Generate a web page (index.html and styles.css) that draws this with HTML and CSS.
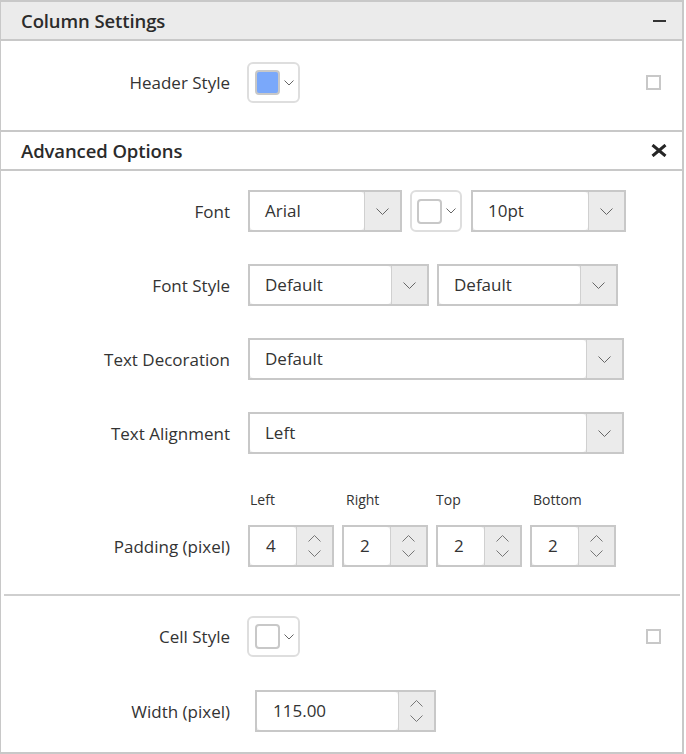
FILE: index.html
```html
<!DOCTYPE html>
<html>
<head>
<meta charset="utf-8">
<link rel="stylesheet" href="styles.css">
</head>
<body>
<div class="panel">
  <div class="head head-gray">
    <span class="title">Column Settings</span>
    <svg class="minus" width="13" height="2" viewBox="0 0 13 2"><rect width="13" height="2" fill="#333"/></svg>
  </div>
  <div class="row row-top">
    <span class="label">Header Style</span>
    <div class="picker picker-wide"><span class="swatch swatch-blue"></span><svg class="chev-sm" width="10" height="6" viewBox="0 0 10 6"><path d="M0.5 0.5 L5 5 L9.5 0.5" fill="none" stroke="#666" stroke-width="1"/></svg></div>
    <span class="check"></span>
  </div>
  <div class="head head-white">
    <span class="title">Advanced Options</span>
    <svg class="close" width="16" height="13" viewBox="0 0 16 13"><path d="M1.5 1 L14.5 12 M14.5 1 L1.5 12" stroke="#262626" stroke-width="3" fill="none"/></svg>
  </div>
  <div class="form">
    <div class="row row-field">
      <span class="label">Font</span>
      <div class="controls">
        <div class="select w-font"><span class="val">Arial</span><span class="btn"><svg width="13" height="7" viewBox="0 0 13 7"><path d="M0.5 0.5 L6.5 6.5 L12.5 0.5" fill="none" stroke="#666" stroke-width="1"/></svg></span></div>
        <div class="picker"><span class="swatch"></span><svg class="chev-sm" width="10" height="6" viewBox="0 0 10 6"><path d="M0.5 0.5 L5 5 L9.5 0.5" fill="none" stroke="#666" stroke-width="1"/></svg></div>
        <div class="select w-size"><span class="val">10pt</span><span class="btn"><svg width="13" height="7" viewBox="0 0 13 7"><path d="M0.5 0.5 L6.5 6.5 L12.5 0.5" fill="none" stroke="#666" stroke-width="1"/></svg></span></div>
      </div>
    </div>
    <div class="row row-field">
      <span class="label">Font Style</span>
      <div class="controls">
        <div class="select w-half"><span class="val">Default</span><span class="btn"><svg width="13" height="7" viewBox="0 0 13 7"><path d="M0.5 0.5 L6.5 6.5 L12.5 0.5" fill="none" stroke="#666" stroke-width="1"/></svg></span></div>
        <div class="select w-half"><span class="val">Default</span><span class="btn"><svg width="13" height="7" viewBox="0 0 13 7"><path d="M0.5 0.5 L6.5 6.5 L12.5 0.5" fill="none" stroke="#666" stroke-width="1"/></svg></span></div>
      </div>
    </div>
    <div class="row row-field">
      <span class="label">Text Decoration</span>
      <div class="controls">
        <div class="select w-full"><span class="val">Default</span><span class="btn"><svg width="13" height="7" viewBox="0 0 13 7"><path d="M0.5 0.5 L6.5 6.5 L12.5 0.5" fill="none" stroke="#666" stroke-width="1"/></svg></span></div>
      </div>
    </div>
    <div class="row row-field">
      <span class="label">Text Alignment</span>
      <div class="controls">
        <div class="select w-full"><span class="val">Left</span><span class="btn"><svg width="13" height="7" viewBox="0 0 13 7"><path d="M0.5 0.5 L6.5 6.5 L12.5 0.5" fill="none" stroke="#666" stroke-width="1"/></svg></span></div>
      </div>
    </div>
    <div class="padding-block">
      <span></span>
      <div class="sub-labels">
        <span>Left</span><span class="sl-right">Right</span><span class="sl-top">Top</span><span class="sl-bottom">Bottom</span>
      </div>
      <span class="label">Padding (pixel)</span>
      <div class="spinners">
        <div class="spin"><span class="val">4</span><span class="btn spin-btn"><svg width="13" height="7" viewBox="0 0 13 7"><path d="M0.5 6.5 L6.5 0.5 L12.5 6.5" fill="none" stroke="#777" stroke-width="1"/></svg><svg width="13" height="7" viewBox="0 0 13 7"><path d="M0.5 0.5 L6.5 6.5 L12.5 0.5" fill="none" stroke="#777" stroke-width="1"/></svg></span></div>
        <div class="spin"><span class="val">2</span><span class="btn spin-btn"><svg width="13" height="7" viewBox="0 0 13 7"><path d="M0.5 6.5 L6.5 0.5 L12.5 6.5" fill="none" stroke="#777" stroke-width="1"/></svg><svg width="13" height="7" viewBox="0 0 13 7"><path d="M0.5 0.5 L6.5 6.5 L12.5 0.5" fill="none" stroke="#777" stroke-width="1"/></svg></span></div>
        <div class="spin"><span class="val">2</span><span class="btn spin-btn"><svg width="13" height="7" viewBox="0 0 13 7"><path d="M0.5 6.5 L6.5 0.5 L12.5 6.5" fill="none" stroke="#777" stroke-width="1"/></svg><svg width="13" height="7" viewBox="0 0 13 7"><path d="M0.5 0.5 L6.5 6.5 L12.5 0.5" fill="none" stroke="#777" stroke-width="1"/></svg></span></div>
        <div class="spin"><span class="val">2</span><span class="btn spin-btn"><svg width="13" height="7" viewBox="0 0 13 7"><path d="M0.5 6.5 L6.5 0.5 L12.5 6.5" fill="none" stroke="#777" stroke-width="1"/></svg><svg width="13" height="7" viewBox="0 0 13 7"><path d="M0.5 0.5 L6.5 6.5 L12.5 0.5" fill="none" stroke="#777" stroke-width="1"/></svg></span></div>
      </div>
    </div>
  </div>
  <div class="divider"></div>
  <div class="bottom">
    <div class="row row-cell">
      <span class="label">Cell Style</span>
      <div class="picker picker-wide"><span class="swatch"></span><svg class="chev-sm" width="10" height="6" viewBox="0 0 10 6"><path d="M0.5 0.5 L5 5 L9.5 0.5" fill="none" stroke="#666" stroke-width="1"/></svg></div>
      <span class="check"></span>
    </div>
    <div class="row row-width">
      <span class="label">Width (pixel)</span>
      <div class="spin spin-wide"><span class="val">115.00</span><span class="btn spin-btn"><svg width="13" height="7" viewBox="0 0 13 7"><path d="M0.5 6.5 L6.5 0.5 L12.5 6.5" fill="none" stroke="#777" stroke-width="1"/></svg><svg width="13" height="7" viewBox="0 0 13 7"><path d="M0.5 0.5 L6.5 6.5 L12.5 0.5" fill="none" stroke="#777" stroke-width="1"/></svg></span></div>
    </div>
  </div>
</div>
</body>
</html>
```

FILE: styles.css
```css
* { box-sizing: border-box; }

body {
  margin: 0;
  background: #fff;
  font-family: "Open Sans", "Noto Sans", sans-serif;
  color: #333;
}

.panel {
  width: 684px;
  height: 754px;
  border-left: 1px solid #c8c8c8;
  border-right: 2px solid #c8c8c8;
  border-bottom: 2px solid #c8c8c8;
}

.head {
  height: 41px;
  border-top: 2px solid #c8c8c8;
  border-bottom: 2px solid #c8c8c8;
  display: flex;
  align-items: center;
  justify-content: space-between;
  padding: 0 16px 0 20px;
}

.head-gray { background: #ebebeb; }
.head-white { background: #fff; padding-right: 15px; }

.title {
  font-size: 18.5px;
  font-weight: 600;
  color: #2b2b2b;
  letter-spacing: -0.1px;
}

.row {
  display: grid;
  grid-template-columns: 229px auto 1fr;
  column-gap: 18px;
  align-items: center;
}

.label {
  font-size: 17px;
  text-align: right;
  color: #333;
  white-space: nowrap;
}

.row-top {
  padding: 21px 0 27px;
}

.check {
  justify-self: end;
  width: 15px;
  height: 15px;
  border: 2px solid #c8c8c8;
  margin-right: 21px;
}

.picker {
  width: 52px;
  height: 42px;
  border: 2px solid #dedede;
  border-radius: 6px;
  display: flex;
  align-items: center;
  padding-left: 5px;
  gap: 4px;
}

.picker-wide {
  width: 53px;
  height: 41px;
  margin-left: -1px;
  padding-left: 6px;
}

.swatch {
  width: 25px;
  height: 25px;
  border: 2px solid #c8c8c8;
  border-radius: 4px;
  background: #fff;
}

.swatch-blue { background: #7aa8fa; }

.form {
  padding-top: 19px;
  display: flex;
  flex-direction: column;
  gap: 32px;
}

.row-field {
  grid-template-columns: 229px 1fr;
}

.controls {
  display: flex;
  gap: 8px;
}

.select, .spin {
  height: 42px;
  border: 2px solid #c8c8c8;
  background: #ebebeb;
  display: flex;
}

.val {
  flex: 1;
  background: #fff;
  border-radius: 0 4px 4px 4px;
  font-size: 17px;
  line-height: 38px;
  padding-left: 15px;
  color: #333;
}

.btn {
  width: 36px;
  border-left: 1px solid #d0d0d0;
  display: flex;
  align-items: center;
  justify-content: center;
}

.w-font { width: 154px; }
.w-size { width: 155px; margin-left: 1px; }
.w-half { width: 181px; }
.w-full { width: 376px; }

.padding-block {
  margin-top: 4px;
  display: grid;
  grid-template-columns: 229px 1fr;
  column-gap: 18px;
  row-gap: 15px;
  align-items: center;
}

.sub-labels {
  display: grid;
  grid-template-columns: 94px 94px 94px 94px;
  font-size: 14px;
  line-height: 20px;
  color: #333;
}

.sub-labels span { padding-left: 2px; }
.sub-labels .sl-right { padding-left: 4px; }
.sub-labels .sl-top { padding-left: 0; }
.sub-labels .sl-bottom { padding-left: 3px; }

.spinners {
  display: flex;
  gap: 8px;
}

.spin { width: 86px; }

.spin-btn {
  flex-direction: column;
  gap: 8px;
}

.spin .val { padding-left: 16px; }

.divider {
  height: 2px;
  background: #cfcfcf;
  margin: 27px 2px 0 3px;
}

.bottom {
  padding-top: 20px;
  display: flex;
  flex-direction: column;
  gap: 33px;
}

.row-cell .picker-wide { height: 41px; }

.row-width {
  grid-template-columns: 229px 1fr;
}

.spin-wide {
  width: 181px;
  margin-left: 7px;
}

.spin-wide .val { padding-left: 16px; }
```
